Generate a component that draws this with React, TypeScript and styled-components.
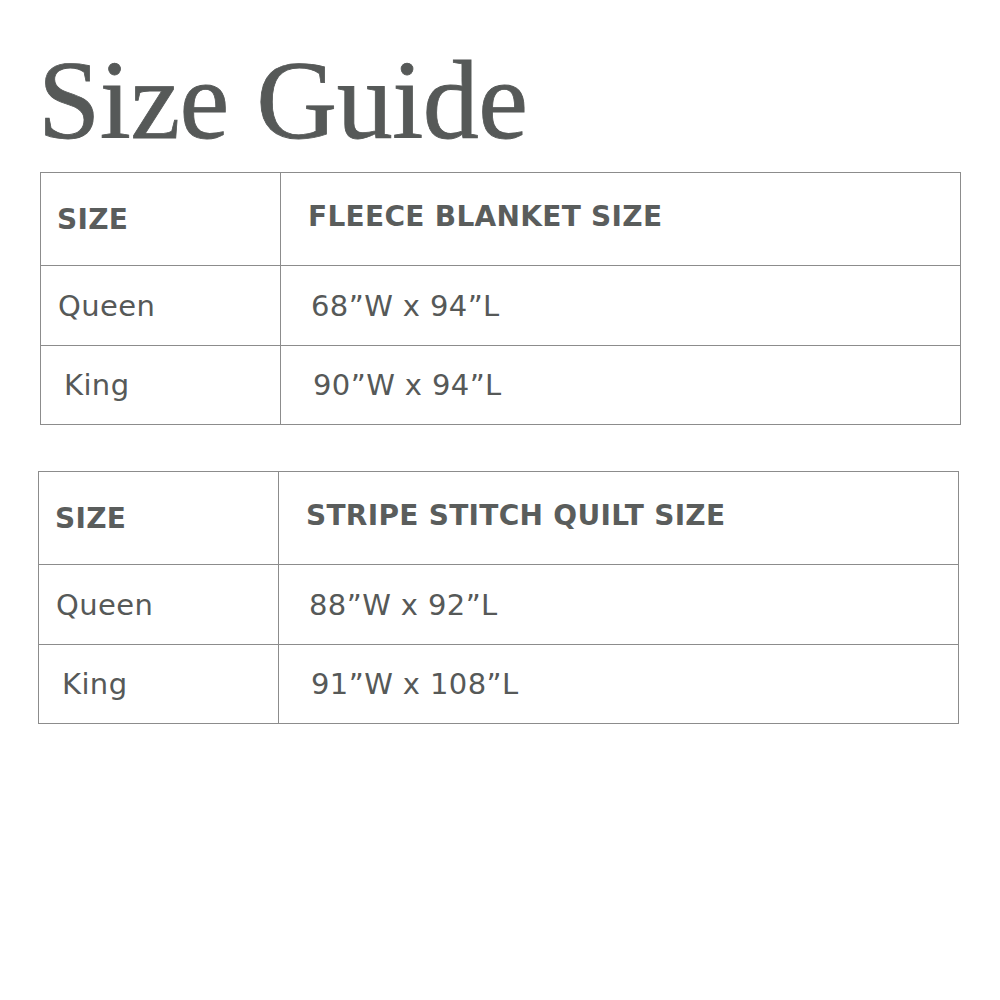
import React from 'react'
import styled, { createGlobalStyle } from 'styled-components'

type Row = {
  size: string
  dims: string
}

type GuideProps = {
  title: string
  rows: Row[]
  shift?: number
}

const GlobalStyle = createGlobalStyle`
  body {
    margin: 0;
    background: #fff;
    font-family: 'DejaVu Sans', 'Liberation Sans', sans-serif;
    color: #555857;
  }
`

const Page = styled.div`
  width: 1000px;
  height: 1000px;
  box-sizing: border-box;
  padding: 44px 0 0 38px;
  display: flex;
  flex-direction: column;
  gap: 46px;
`

const Heading = styled.h1`
  margin: 0 0 -30px 0;
  font-family: 'Liberation Serif', serif;
  font-weight: 400;
  font-size: 112px;
  line-height: 112px;
  letter-spacing: -0.5px;
  color: #565958;
  -webkit-text-stroke: 0.8px #565958;
`

const Table = styled.table<{ $shift: number }>`
  border-collapse: collapse;
  width: 921px;
  margin-left: ${(p) => p.$shift}px;
  table-layout: fixed;

  td {
    border: 1px solid #8c8c8c;
    padding: 0;
    vertical-align: middle;
  }
`

const HeadCell = styled.td<{ $lift: number }>`
  height: 93px;
  box-sizing: border-box;
  padding-bottom: ${(p) => p.$lift}px !important;
  font-weight: 600;
  font-size: 28px;
  letter-spacing: 0.3px;
  color: #5a5d5c;
`

const Cell = styled.td<{ $tall?: boolean }>`
  height: ${(p) => (p.$tall ? 79 : 78)}px;
  font-size: 29px;
  letter-spacing: 0.4px;
  color: #565958;
`

const Label = styled.span<{ $indent: number }>`
  display: block;
  padding-left: ${(p) => p.$indent}px;
`

const SizeGuide = ({ title, rows, shift = 0 }: GuideProps) => (
  <Table $shift={shift}>
    <colgroup>
      <col style={{ width: 240 }} />
      <col />
    </colgroup>
    <tbody>
      <tr>
        <HeadCell $lift={-4}>
          <Label $indent={16}>SIZE</Label>
        </HeadCell>
        <HeadCell $lift={6}>
          <Label $indent={27}>{title}</Label>
        </HeadCell>
      </tr>
      {rows.map((row, i) => (
        <tr key={row.size}>
          <Cell $tall={i === 0}>
            <Label $indent={i === 0 ? 17 : 23}>{row.size}</Label>
          </Cell>
          <Cell $tall={i === 0}>
            <Label $indent={i === 0 ? 30 : 32}>{row.dims}</Label>
          </Cell>
        </tr>
      ))}
    </tbody>
  </Table>
)

export default function App() {
  return (
    <>
      <GlobalStyle />
      <Page>
        <Heading>Size Guide</Heading>
        <SizeGuide
          shift={2}
          title="FLEECE BLANKET SIZE"
          rows={[
            { size: 'Queen', dims: '68”W x 94”L' },
            { size: 'King', dims: '90”W x 94”L' },
          ]}
        />
        <SizeGuide
          title="STRIPE STITCH QUILT SIZE"
          rows={[
            { size: 'Queen', dims: '88”W x 92”L' },
            { size: 'King', dims: '91”W x 108”L' },
          ]}
        />
      </Page>
    </>
  )
}
